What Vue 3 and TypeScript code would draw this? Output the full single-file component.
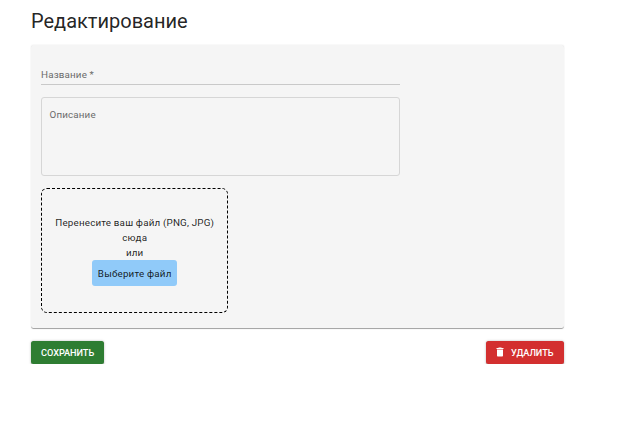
<script setup lang="ts">
import { ref } from 'vue'

const title = ref('')
const description = ref('')
</script>

<template>
  <main class="page">
    <h1 class="heading">Редактирование</h1>
    <section class="paper">
      <label class="field">
        <input v-model="title" class="line-input" type="text" placeholder="Название *" />
      </label>
      <textarea v-model="description" class="area" placeholder="Описание"></textarea>
      <div class="drop">
        <p class="drop-text">Перенесите ваш файл (PNG, JPG) сюда</p>
        <p class="drop-text">или</p>
        <button type="button" class="pick">Выберите файл</button>
      </div>
    </section>
    <div class="actions">
      <button type="button" class="btn save">Сохранить</button>
      <button type="button" class="btn remove">
        <svg class="icon" viewBox="0 0 24 24" aria-hidden="true">
          <path d="M6 19c0 1.1.9 2 2 2h8c1.1 0 2-.9 2-2V7H6v12zM19 4h-3.5l-1-1h-5l-1 1H5v2h14V4z" />
        </svg>
        <span>Удалить</span>
      </button>
    </div>
  </main>
</template>

<style>
body {
  background: #fff;
}
</style>

<style scoped>
.page {
  box-sizing: border-box;
  width: 563.5px;
  padding: 5px 0 0 31px;
  font-family: Roboto, "Liberation Sans", sans-serif;
  font-size: 9.8px;
  color: rgba(0, 0, 0, 0.87);
}
.heading {
  margin: 0 0 8px;
  font-size: 20px;
  line-height: 32px;
  font-weight: 400;
  letter-spacing: 0;
}
.paper {
  box-sizing: border-box;
  height: 283px;
  padding: 21px 10px 0;
  display: flex;
  flex-direction: column;
  align-items: flex-start;
  background: #f5f5f5;
  border-radius: 2.5px;
  box-shadow: 0 1px 0 -0.3px rgba(0, 0, 0, 0.25),
    0 0.8px 0.6px rgba(0, 0, 0, 0.14), 0 0.8px 1.6px rgba(0, 0, 0, 0.12);
}
.field {
  display: flex;
  width: 359px;
  height: 18px;
  margin-bottom: 12px;
  border-bottom: 1px solid #c9c9c9;
}
.line-input,
.area {
  padding: 0;
  border: 0;
  outline: 0;
  background: transparent;
  font: inherit;
  line-height: 14px;
  letter-spacing: 0.16px;
  color: inherit;
}
.line-input {
  width: 100%;
  height: 16px;
}
.line-input::placeholder,
.area::placeholder {
  color: #6b6b6b;
  opacity: 1;
}
.area {
  box-sizing: border-box;
  width: 359px;
  height: 79px;
  margin-bottom: 12px;
  padding: 10px 7.5px;
  border: 1px solid #d6d6d6;
  border-radius: 3px;
  resize: none;
}
.drop {
  box-sizing: border-box;
  display: flex;
  flex-direction: column;
  align-items: center;
  width: 187.4px;
  height: 125px;
  padding: 26px 10px 0;
  border: 1px dashed #000;
  border-radius: 6px;
  text-align: center;
}
.drop-text {
  margin: 0;
  line-height: 15px;
  letter-spacing: 0.19px;
}
.pick {
  width: 85px;
  height: 26px;
  padding: 0;
  border: 0;
  border-radius: 3px;
  background: #90caf9;
  color: inherit;
  font: inherit;
  letter-spacing: 0.19px;
}
.actions {
  display: flex;
  justify-content: space-between;
  padding-top: 12.5px;
}
.btn {
  display: flex;
  align-items: center;
  height: 23px;
  padding: 0 10px;
  border: 0;
  border-radius: 2.5px;
  color: #fff;
  font-family: inherit;
  font-size: 9.2px;
  font-weight: 500;
  letter-spacing: -0.05px;
  text-transform: uppercase;
  box-shadow: 0 0.6px 1px rgba(0, 0, 0, 0.22), 0 0.6px 3px rgba(0, 0, 0, 0.2);
}
.save {
  background: #2e7d32;
}
.remove {
  gap: 5.5px;
  padding-left: 8px;
  background: #d32f2f;
}
.icon {
  width: 12px;
  height: 12px;
  fill: currentColor;
}
</style>
